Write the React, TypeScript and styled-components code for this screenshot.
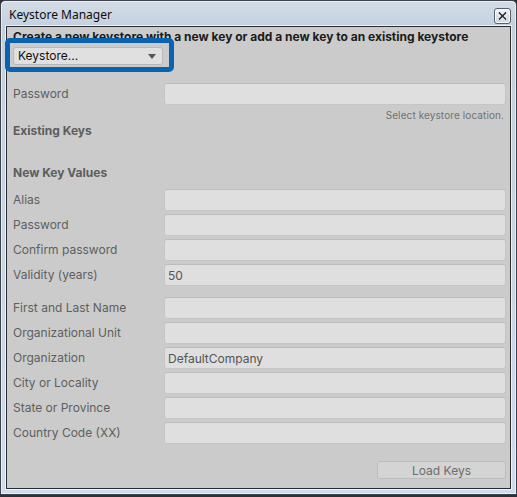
import React from "react";
import styled, { createGlobalStyle } from "styled-components";

const Global = createGlobalStyle`
  html, body { margin: 0; padding: 0; }
  body {
    background: #2e3033;
    width: 517px;
    height: 497px;
    overflow: hidden;
  }
  * { box-sizing: border-box; }
`;

const Window = styled.div`
  width: 517px;
  height: 495px;
  border: 1px solid #3f444b;
  border-radius: 5px 5px 0 0;
  background: linear-gradient(180deg, #d4dde7 0px, #c3d0de 26px, #c9d6e4 60%, #cfdced 100%);
  box-shadow: inset 0 0 0 1px rgba(255, 255, 255, 0.55);
  padding: 0 5px 5px 5px;
  display: flex;
  flex-direction: column;
`;

const TitleBar = styled.div`
  height: 25px;
  display: flex;
  align-items: center;
  justify-content: space-between;
  padding: 0 0 0 3px;
`;

const Title = styled.span`
  font-family: "Noto Sans", "Liberation Sans", sans-serif;
  font-size: 12px;
  color: #0d0d0d;
  padding-top: 2px;
`;

const CloseBtn = styled.div`
  width: 17px;
  height: 16px;
  margin-top: 5px;
  border: 1px solid #56616e;
  border-radius: 3px;
  background: linear-gradient(180deg, #f4f6f9 0%, #dde3ea 50%, #cfd7e0 100%);
  box-shadow: inset 0 0 0 1px rgba(255, 255, 255, 0.8);
  display: flex;
  align-items: center;
  justify-content: center;
`;

const Content = styled.div`
  flex: 1;
  position: relative;
  background: #cbcbcb;
  border: 1px solid #2a2c2f;
  box-shadow: 0 0 0 1px rgba(255, 255, 255, 0.7);
  padding: 3px 4px 0 6px;
  display: flex;
  flex-direction: column;
  font-family: "Inter", "Noto Sans", sans-serif;
  font-size: 12px;
`;

const Heading = styled.div`
  font-weight: 700;
  color: #1b1b1b;
  line-height: 14px;
  white-space: nowrap;
`;

const DropWrap = styled.div`
  position: relative;
  margin-top: 3px;
  width: 150px;
  height: 18px;
`;

const Highlight = styled.div`
  position: absolute;
  left: -8px;
  top: -9px;
  right: -11px;
  bottom: -7px;
  border: 5px solid #0963b0;
  border-radius: 5px;
  background: #cbcbcb;
`;

const Dropdown = styled.div`
  position: relative;
  height: 18px;
  background: #e0e0e0;
  border: 1px solid #b9b9b9;
  border-radius: 3px;
  display: flex;
  align-items: center;
  justify-content: space-between;
  padding: 0 6px 0 4px;
  color: #111;
  line-height: 14px;
`;

const Arrow = styled.span`
  width: 0;
  height: 0;
  border-left: 4px solid transparent;
  border-right: 4px solid transparent;
  border-top: 5px solid #555;
`;

const Row = styled.div<{ $mt?: number }>`
  display: grid;
  grid-template-columns: 151px 1fr;
  align-items: center;
  margin-top: ${(p) => p.$mt ?? 3}px;
`;

const Label = styled.span`
  color: #5f5f5f;
  line-height: 14px;
`;

const Input = styled.div`
  height: 22px;
  background: #dfdfdf;
  border: 1px solid #c6c6c6;
  border-top-color: #bdbdbd;
  border-radius: 3px;
  padding: 0 3px;
  display: flex;
  align-items: center;
  color: #555;
`;

const Hint = styled.div`
  margin-top: 3px;
  text-align: right;
  font-size: 10px;
  line-height: 14px;
  color: #727272;
  padding-right: 2px;
  letter-spacing: 0.1px;
`;

const Section = styled.div<{ $mt: number }>`
  margin-top: ${(p) => p.$mt}px;
  font-weight: 700;
  color: #5d5d5d;
  line-height: 14px;
`;

const Footer = styled.div`
  margin-top: 17px;
  display: flex;
  justify-content: flex-end;
`;

const Button = styled.div`
  width: 129px;
  height: 18px;
  background: #d4d4d4;
  border: 1px solid #bdbdbd;
  border-radius: 3px;
  display: flex;
  align-items: center;
  justify-content: center;
  color: #6c6c6c;
`;

type Field = { label: string; value?: string; mt?: number };

const keyFields: Field[] = [
  { label: "Alias", mt: 9 },
  { label: "Password" },
  { label: "Confirm password" },
  { label: "Validity (years)", value: "50" },
  { label: "First and Last Name", mt: 11 },
  { label: "Organizational Unit" },
  { label: "Organization", value: "DefaultCompany" },
  { label: "City or Locality" },
  { label: "State or Province" },
  { label: "Country Code (XX)" },
];

export default function App() {
  return (
    <>
      <Global />
      <Window>
        <TitleBar>
          <Title>Keystore Manager</Title>
          <CloseBtn>
            <svg width="9" height="8" viewBox="0 0 9 8">
              <path d="M1.5 1 L7.5 7 M7.5 1 L1.5 7" stroke="#fff" strokeWidth="3.2" strokeLinecap="square" />
              <path d="M1.5 1 L7.5 7 M7.5 1 L1.5 7" stroke="#2b2f36" strokeWidth="1.7" strokeLinecap="square" />
            </svg>
          </CloseBtn>
        </TitleBar>
        <Content>
          <Heading>Create a new keystore with a new key or add a new key to an existing keystore</Heading>
          <DropWrap>
            <Highlight />
            <Dropdown>
              <span>Keystore...</span>
              <Arrow />
            </Dropdown>
          </DropWrap>
          <Row $mt={18}>
            <Label>Password</Label>
            <Input />
          </Row>
          <Hint>Select keystore location.</Hint>
          <Section $mt={2}>Existing Keys</Section>
          <Section $mt={28}>New Key Values</Section>
          {keyFields.map((f) => (
            <Row key={f.label + (f.mt ?? "")} $mt={f.mt}>
              <Label>{f.label}</Label>
              <Input>{f.value}</Input>
            </Row>
          ))}
          <Footer>
            <Button>Load Keys</Button>
          </Footer>
        </Content>
      </Window>
    </>
  );
}
